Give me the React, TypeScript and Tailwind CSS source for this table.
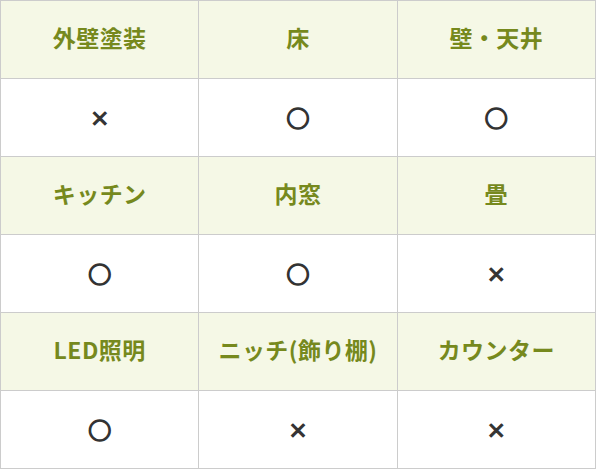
import React from "react";

const items: { label: string; value: string }[][] = [
  [
    { label: "外壁塗装", value: "×" },
    { label: "床", value: "○" },
    { label: "壁・天井", value: "○" },
  ],
  [
    { label: "キッチン", value: "○" },
    { label: "内窓", value: "○" },
    { label: "畳", value: "×" },
  ],
  [
    { label: "LED照明", value: "○" },
    { label: "ニッチ(飾り棚)", value: "×" },
    { label: "カウンター", value: "×" },
  ],
];

export default function App() {
  return (
    <div className="w-[596px] h-[470px] bg-white" style={{ fontFamily: '"Noto Sans CJK JP", "Noto Sans", sans-serif' }}>
      <div className="w-[596px] border-t border-l border-[#cccccc]">
        {items.map((row, ri) => (
          <div key={ri} className="grid grid-cols-3">
            {row.map((it) => (
              <div key={it.label} className="flex flex-col">
                <div className="h-[78px] pb-[5px] flex items-center justify-center bg-[#f5f8e6] border-r border-b border-[#cccccc] text-[23px] font-bold text-[#76891d] tracking-[0.02em]">
                  {it.label}
                </div>
                <div className="h-[78px] flex items-center justify-center bg-white border-r border-b border-[#cccccc] text-[#333333]">
                  {it.value === "○" ? (
                    <span className="text-[23px] font-bold leading-none [-webkit-text-stroke:1.6px_#333333]">○</span>
                  ) : (
                    <span className="text-[20px] font-bold leading-none [-webkit-text-stroke:1px_#333333]">×</span>
                  )}
                </div>
              </div>
            ))}
          </div>
        ))}
      </div>
    </div>
  );
}
